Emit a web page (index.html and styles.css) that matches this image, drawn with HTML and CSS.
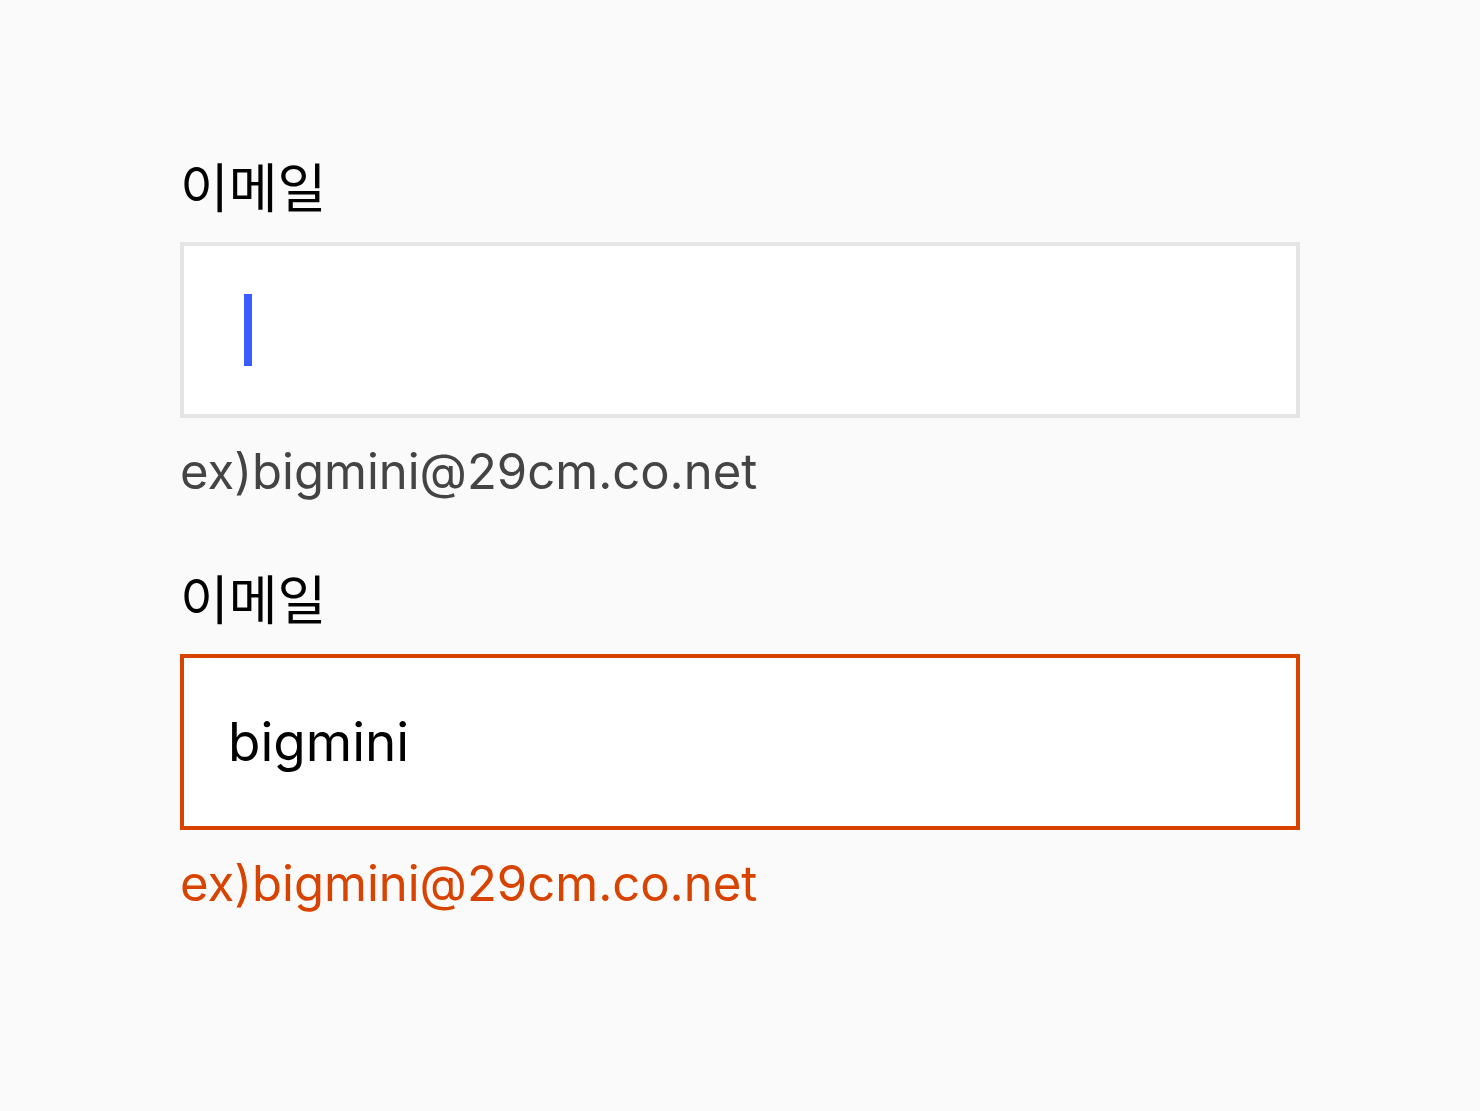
FILE: index.html
```html
<!DOCTYPE html>
<html lang="ko">
<head>
<meta charset="utf-8">
<link rel="stylesheet" href="styles.css">
</head>
<body>
<main class="form">
  <div class="field">
    <label class="label">이메일</label>
    <div class="input">
      <span class="caret"></span>
    </div>
    <p class="help">ex)bigmini@29cm.co.net</p>
  </div>
  <div class="field field-error">
    <label class="label">이메일</label>
    <div class="input">
      <span class="value">bigmini</span>
    </div>
    <p class="help">ex)bigmini@29cm.co.net</p>
  </div>
</main>
</body>
</html>
```

FILE: styles.css
```css
html, body {
  margin: 0;
  padding: 0;
  background: #fafafa;
}
body {
  font-family: Inter, "Noto Sans CJK KR", sans-serif;
  color: #000;
}
.form {
  padding: 150px 180px 0;
  width: 1120px;
  display: flex;
  flex-direction: column;
  gap: 60px;
}
.field {
  display: flex;
  flex-direction: column;
}
.label {
  font-family: "Noto Sans CJK KR", sans-serif;
  font-size: 53px;
  line-height: 70px;
  height: 70px;
  margin-bottom: 22px;
}
.input {
  box-sizing: border-box;
  height: 176px;
  border: 4px solid #e5e5e5;
  background: #fff;
  display: flex;
  align-items: center;
  padding-left: 44px;
}
.caret {
  display: block;
  width: 8px;
  height: 72px;
  margin-left: 16px;
  background: #3a5cff;
}
.value {
  font-size: 53px;
  line-height: 58px;
}
.help {
  margin: 24px 0 0;
  font-size: 49px;
  line-height: 60px;
  color: #444;
}
.field-error .input {
  border-color: #d84300;
}
.field-error .help {
  color: #d84300;
}
```
